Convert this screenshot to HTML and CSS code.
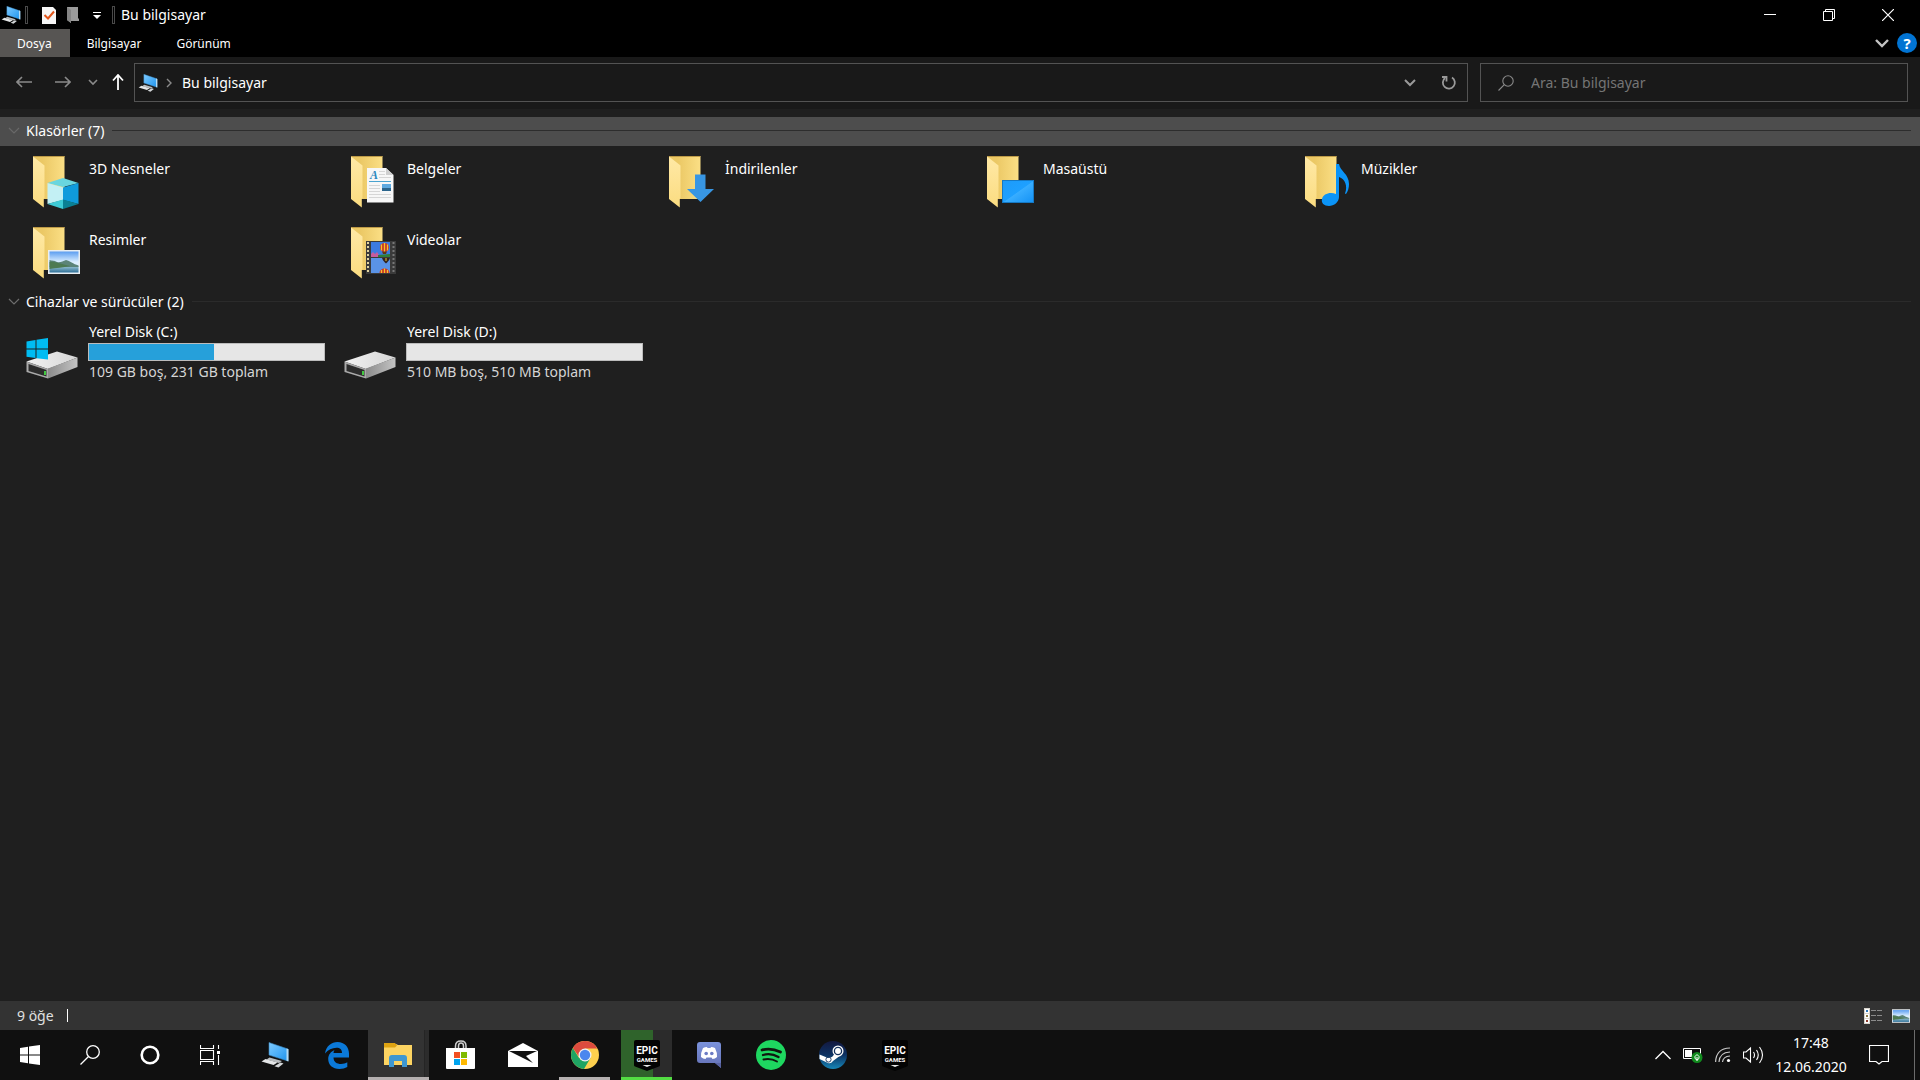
FILE: index.html
```html
<!DOCTYPE html>
<html lang="tr">
<head>
    <meta charset="UTF-8">
    <meta name="viewport" content="width=device-width, initial-scale=1.0">
    <title>Bu bilgisayar</title>
    <link rel="stylesheet" href="styles.css">
</head>
<body>
    <!-- shared icon shapes -->
    <svg class="defs" width="0" height="0" aria-hidden="true">
        <defs>
            <linearGradient id="folderBack" x1="0" x2="1">
                <stop offset="0.3" stop-color="#ebc865"/>
                <stop offset="1" stop-color="#fbdf85"/>
            </linearGradient>
            <linearGradient id="folderFront" x1="0" y1="0" x2="0" y2="1">
                <stop offset="0" stop-color="#ffe9a6"/>
                <stop offset="1" stop-color="#fbdc80"/>
            </linearGradient>
            <linearGradient id="screen" x1="0" y1="0" x2="1" y2="1">
                <stop offset="0" stop-color="#7fcbff"/>
                <stop offset="1" stop-color="#1d94ef"/>
            </linearGradient>
            <linearGradient id="sky" x1="0" y1="0" x2="0" y2="1">
                <stop offset="0" stop-color="#5b9df0"/>
                <stop offset="0.5" stop-color="#dcefff"/>
            </linearGradient>
            <linearGradient id="water" x1="0" y1="0" x2="0" y2="1">
                <stop offset="0" stop-color="#9cc6d4"/>
                <stop offset="1" stop-color="#2f6f96"/>
            </linearGradient>
            <linearGradient id="desk" x1="0" y1="0" x2="1" y2="1">
                <stop offset="0" stop-color="#1d9bfa"/>
                <stop offset="0.5" stop-color="#1ea0ff"/>
                <stop offset="0.52" stop-color="#38adff"/>
                <stop offset="1" stop-color="#1492f5"/>
            </linearGradient>
            <linearGradient id="driveSide" x1="0" x2="1">
                <stop offset="0" stop-color="#8b8b8b"/>
                <stop offset="1" stop-color="#c4c4c4"/>
            </linearGradient>
            <linearGradient id="driveTop" x1="0" x2="1">
                <stop offset="0" stop-color="#f2f2f2"/>
                <stop offset="1" stop-color="#d6d6d6"/>
            </linearGradient>
            <linearGradient id="steamBg" x1="0" y1="0" x2="0" y2="1">
                <stop offset="0" stop-color="#13183f"/>
                <stop offset="0.5" stop-color="#0d3263"/>
                <stop offset="1" stop-color="#1787b8"/>
            </linearGradient>
            <linearGradient id="discordBg" x1="0" y1="0" x2="0" y2="1">
                <stop offset="0" stop-color="#7b93dc"/>
                <stop offset="1" stop-color="#6470b4"/>
            </linearGradient>

            <symbol id="pc" viewBox="0 0 28 26">
                <path d="M8 0.500 L27 7 L27 19 L8 13 Z" fill="url(#screen)" stroke="#3c88bf" stroke-width="0.600"/>
                <path d="M25.500 6.500 L27.500 7.200 V19.500 L25.500 18.800 Z" fill="#b9dcf2"/>
                <path d="M8.500 15.500 L21 19 L18 21 L5.500 17.600 Z" fill="#b9bdc0"/>
                <path d="M4.500 17 L16.500 20.500 L12.500 23 L0.500 19.500 Z" fill="#e4e6e7"/>
                <path d="M19.500 20.500 L22.500 21.500 L17.500 25.500 L13.500 24.300 Z" fill="#d3d6d8"/>
            </symbol>
            <symbol id="folder" viewBox="0 0 48 54">
                <path d="M0 0 H31.500 V43 H0 Z" fill="url(#folderBack)"/>
                <path d="M0 0.400 H31.500" stroke="#b89544" stroke-width="1"/>
                <path d="M0 0.500 L11.500 9.500 V42 L10.800 43 V51.500 L0 43 Z" fill="url(#folderFront)"/>
            </symbol>
            <symbol id="photo" viewBox="0 0 32 24">
                <rect width="32" height="24" fill="#e9eef2"/>
                <rect x="1.500" y="1.500" width="29" height="21" fill="url(#sky)"/>
                <path d="M1.500 16 H30.500 V22.500 H1.500 Z" fill="url(#water)"/>
                <path d="M1.500 10 C4 11 6 10 9 12 C12 13 15 11 18 10 C22 11 25 14 30.500 15.500 V17 H1.500 Z" fill="#5c8478"/>
                <path d="M1.500 12 C6 11 12 14 22 16 C15 17.500 8 18 1.500 19 Z" fill="#4d7a52"/>
            </symbol>
            <symbol id="drive" viewBox="0 0 52 41">
                <path d="M0.500 23.500 L31 13.500 L51.500 19.500 L22 31 Z" fill="url(#driveTop)"/>
                <path d="M22 30.500 L51.500 19.500 V29 L22 40.500 Z" fill="url(#driveSide)"/>
                <path d="M0.500 23.500 L22 31 V40.500 L0.500 34 Z" fill="#aaaaaa"/>
                <path d="M2.500 26 L20.500 32 V38.500 L2.500 33 Z" fill="#2c2c2c"/>
                <rect x="18" y="33" width="2" height="4" fill="#42c840"/>
            </symbol>
            <symbol id="epic" viewBox="0 0 26 31">
                <path d="M2 0 H24 Q26 0 26 2 V25 Q26 26 25 26.500 L13 31 L1 26.500 Q0 26 0 25 V2 Q0 0 2 0 Z" fill="#030303"/>
                <text x="13" y="14" text-anchor="middle" class="epic-name">EPIC</text>
                <text x="13" y="22" text-anchor="middle" class="epic-sub">GAMES</text>
                <path d="M8.500 25 H17.500 L13 27 Z" fill="#e8e8e8"/>
            </symbol>
        </defs>
    </svg>

    <header class="titlebar">
        <svg width="20" height="18"><use href="#pc"/></svg>
        <span class="sep"></span>
        <button class="quick" aria-label="Özellikler">
            <svg width="14" height="18" viewBox="0 0 14 18">
                <path d="M0 1 H11 L14 4 V18 H0 Z" fill="#f6f6f6"/>
                <path d="M2.500 9 L6 12.500 L12 5.500" fill="none" stroke="#e2561b" stroke-width="2"/>
            </svg>
        </button>
        <button class="quick" aria-label="Yeni klasör">
            <svg width="12" height="18" viewBox="0 0 12 18">
                <path d="M0 1 H11 V12 L12 13 V15 H4 V17 L0 14 Z" fill="#9b9b9b"/>
                <path d="M0 1 L4 4 V17 L0 14 Z" fill="#858585"/>
            </svg>
        </button>
        <button class="quick" aria-label="Hızlı erişim">
            <svg width="8" height="8" viewBox="0 0 8 8">
                <path d="M0 1.500 H8" stroke="#fff"/>
                <path d="M0 4 H8 L4 8 Z" fill="#fff"/>
            </svg>
        </button>
        <span class="sep"></span>
        <h1>Bu bilgisayar</h1>
        <div class="window-buttons">
            <button aria-label="Küçült">
                <svg width="12" height="12"><path d="M0 5.500 H12" stroke="#fff"/></svg>
            </button>
            <button aria-label="Geri yükle">
                <svg width="12" height="12" fill="none" stroke="#fff">
                    <path d="M0.500 2.500 H9.500 V11.500 H0.500 Z M2.500 2.500 V0.500 H11.500 V9.500 H9.500"/>
                </svg>
            </button>
            <button aria-label="Kapat">
                <svg width="12" height="12"><path d="M0 0 L12 12 M12 0 L0 12" stroke="#fff" stroke-width="1.200"/></svg>
            </button>
        </div>
    </header>

    <nav class="ribbon">
        <button class="tab active">Dosya</button>
        <button class="tab">Bilgisayar</button>
        <button class="tab">Görünüm</button>
        <div class="ribbon-end">
            <button aria-label="Şeridi genişlet">
                <svg width="14" height="10"><path d="M1 2 L7 8 L13 2" fill="none" stroke="#c3c3c3" stroke-width="2.400"/></svg>
            </button>
            <button class="help" aria-label="Yardım">?</button>
        </div>
    </nav>

    <div class="toolbar">
        <div class="arrows">
            <button aria-label="Geri">
                <svg width="16" height="12"><path d="M16 6 H1 M6 1 L1 6 L6 11" fill="none" stroke="#8a8a8a" stroke-width="1.600"/></svg>
            </button>
            <button aria-label="İleri">
                <svg width="16" height="12"><path d="M0 6 H15 M10 1 L15 6 L10 11" fill="none" stroke="#8a8a8a" stroke-width="1.600"/></svg>
            </button>
            <button class="recent" aria-label="Son konumlar">
                <svg width="10" height="8"><path d="M1 2 L5 6 L9 2" fill="none" stroke="#8a8a8a" stroke-width="1.600"/></svg>
            </button>
            <button class="up" aria-label="Yukarı">
                <svg width="12" height="16"><path d="M6 16 V1 M1 6.500 L6 1 L11 6.500" fill="none" stroke="#fff" stroke-width="1.800"/></svg>
            </button>
        </div>
        <div class="address">
            <svg width="20" height="18"><use href="#pc"/></svg>
            <svg class="crumb-arrow" width="6" height="10"><path d="M1 1 L5 5 L1 9" fill="none" stroke="#8a8a8a" stroke-width="1.400"/></svg>
            <a href="#">Bu bilgisayar</a>
            <button class="address-drop" aria-label="Önceki konumlar">
                <svg width="12" height="8"><path d="M1 1 L6 6 L11 1" fill="none" stroke="#9a9a9a" stroke-width="2"/></svg>
            </button>
            <button class="refresh" aria-label="Yenile">
                <svg width="16" height="16" fill="none" stroke="#9a9a9a" stroke-width="1.800">
                    <path d="M11 2.500 A6 6 0 1 1 4 3"/>
                    <path d="M1 2 H5.500 V6.500"/>
                </svg>
            </button>
        </div>
        <div class="search">
            <svg width="16" height="16" fill="none" stroke="#8a8a8a" stroke-width="1.100">
                <circle cx="10" cy="6" r="5.200"/>
                <path d="M6.300 9.700 L0.500 15.500"/>
            </svg>
            <input type="text" aria-label="Ara" placeholder="Ara: Bu bilgisayar">
        </div>
    </div>

    <main>
        <section>
            <button class="group-head selected">
                <svg width="12" height="8"><path d="M1 1 L6 6 L11 1" fill="none" stroke="#696969" stroke-width="1.200"/></svg>
                <span>Klasörler (7)</span>
            </button>
            <div class="grid">
                <a class="folder" href="#">
                    <svg width="48" height="54">
                        <use href="#folder"/>
                        <path d="M14.500 27 L30 22 L45.500 27 L30 31 Z" fill="#69d6df"/>
                        <path d="M14.500 27 L30 31.500 V44 L14.500 48 Z" fill="#c3f0f4"/>
                        <path d="M30 31.500 L45.500 27 V48 L30 44 Z" fill="#0f9bdc"/>
                        <path d="M14.500 48 L30 43.500 V53 Z" fill="#3ecbd6"/>
                        <path d="M30 43.500 L45.500 48 L30 53 Z" fill="#0a8094"/>
                    </svg>
                    <span>3D Nesneler</span>
                </a>
                <a class="folder" href="#">
                    <svg width="48" height="54">
                        <use href="#folder"/>
                        <path d="M16 12 H35 L42.500 19 V46.500 H16 Z" fill="#f7f7f7"/>
                        <path d="M35 12 L42.500 19 H35 Z" fill="#cfcfcf"/>
                        <path d="M28 15.500 H34 M28 18.500 H34 M28 21.500 H40 M18 29.500 H29 M18 32.500 H29 M18 35.500 H29 M18 38.500 H40 M18 41.500 H40" stroke="#d6d6d6"/>
                        <path d="M18 25.500 H40" stroke="#4aa3d0"/>
                        <rect x="31" y="28" width="9" height="4" fill="#5da9e0"/>
                        <rect x="31" y="32" width="9" height="3" fill="#2b658c"/>
                        <text x="19" y="23" class="doc-letter">A</text>
                    </svg>
                    <span>Belgeler</span>
                </a>
                <a class="folder" href="#">
                    <svg width="48" height="54">
                        <use href="#folder"/>
                        <path d="M26 18.500 H36.500 V33 H45 L31.500 46 L18 33 H26 Z" fill="#3896e3"/>
                    </svg>
                    <span>İndirilenler</span>
                </a>
                <a class="folder" href="#">
                    <svg width="48" height="54">
                        <use href="#folder"/>
                        <rect x="15.500" y="24.500" width="31" height="22" fill="url(#desk)" stroke="#1679c4"/>
                    </svg>
                    <span>Masaüstü</span>
                </a>
                <a class="folder" href="#">
                    <svg width="48" height="54">
                        <use href="#folder"/>
                        <path d="M31 8 H34 C35 15 44 18 44 28 C44 32 43 35 41 38 L40 37.500 C43 30 40 23 34 21 V41 C34 46 29 50 24 50 C19 50 16 47 17 43 C18 38 25 35.500 31 38 Z" fill="#0b94f7"/>
                    </svg>
                    <span>Müzikler</span>
                </a>
                <a class="folder" href="#">
                    <svg width="48" height="54">
                        <use href="#folder"/>
                        <use href="#photo" x="15" y="23" width="32" height="24"/>
                    </svg>
                    <span>Resimler</span>
                </a>
                <a class="folder" href="#">
                    <svg width="48" height="54">
                        <use href="#folder"/>
                        <rect x="15" y="14" width="30" height="33" fill="#3a3a3a"/>
                        <path d="M17 15 V47" stroke="#e0d3a0" stroke-width="2" stroke-dasharray="2 2"/>
                        <path d="M42.500 15 V47" stroke="#777" stroke-width="2" stroke-dasharray="2 2"/>
                        <rect x="20" y="15" width="19" height="15" fill="#3d7be0"/>
                        <rect x="20" y="31" width="19" height="15" fill="#5a93e6"/>
                        <path d="M20 30 V27 L22 25 L24 27 L26 25 L28 28 V30 Z" fill="#c65c9e"/>
                        <path d="M27 30 V28 L39 27 V30 Z" fill="#2f7d3b"/>
                        <circle cx="33.500" cy="20.500" r="4.500" fill="#c93a26"/>
                        <path d="M33.500 16 V25 M30.500 17.500 V23.500 M36.500 17.500 V23.500" stroke="#f5c32c" stroke-width="1.200"/>
                        <path d="M31 24.500 H36 L35 27 H32 Z" fill="#5d3516"/>
                        <path d="M31 31 H39 C38 34 36.500 35 35 36.500 C33.500 35 32 34 31 31 Z" fill="#33251f"/>
                        <path d="M35 31 V34" stroke="#f5c32c"/>
                        <path d="M28.500 46 C28.500 40 38.500 40 38.500 46 Z" fill="#c93a26"/>
                        <path d="M33.500 41.500 V46 M30.500 43 V46 M36.500 43 V46" stroke="#f5c32c" stroke-width="1.200"/>
                    </svg>
                    <span>Videolar</span>
                </a>
            </div>
        </section>

        <section>
            <button class="group-head">
                <svg width="12" height="8"><path d="M1 1 L6 6 L11 1" fill="none" stroke="#6e6e6e" stroke-width="1.200"/></svg>
                <span>Cihazlar ve sürücüler (2)</span>
            </button>
            <div class="grid">
                <a class="drive" href="#">
                    <svg width="52" height="41">
                        <use href="#drive"/>
                        <path d="M0.500 3.500 L9.500 2 V10.500 H0.500 Z M10.500 1.800 L22 0 V10.500 H10.500 Z M0.500 11.500 H9.500 V20 L0.500 18.700 Z M10.500 11.500 H22 V21.500 L10.500 20.200 Z" fill="#00bcf2"/>
                    </svg>
                    <div class="drive-info">
                        <span>Yerel Disk (C:)</span>
                        <div class="meter"><div class="used" style="width: 53%"></div></div>
                        <span class="detail">109 GB boş, 231 GB toplam</span>
                    </div>
                </a>
                <a class="drive" href="#">
                    <svg width="52" height="41"><use href="#drive"/></svg>
                    <div class="drive-info">
                        <span>Yerel Disk (D:)</span>
                        <div class="meter"><div class="used" style="width: 0%"></div></div>
                        <span class="detail">510 MB boş, 510 MB toplam</span>
                    </div>
                </a>
            </div>
        </section>
    </main>

    <footer class="status">
        <span>9 öğe</span>
        <span class="status-line"></span>
        <div class="views">
            <button aria-label="Ayrıntılar">
                <svg width="18" height="16">
                    <path d="M0 0 H6 V16 H0 Z" fill="#d8d4cc"/>
                    <path d="M1 1 H5 V5 H1 Z M1 6 H5 V10 H1 Z M1 11 H5 V15 H1 Z" fill="#fff"/>
                    <path d="M2 2 H4 V4 H2 Z" fill="#3178b8"/>
                    <path d="M2 7 H4 V9 H2 Z" fill="#8a7a45"/>
                    <path d="M2 12 H4 V14 H2 Z" fill="#8c3b2e"/>
                    <path d="M7 2.500 H12 M13 2.500 H18 M7 7.500 H12 M13 7.500 H18 M7 12.500 H12 M13 12.500 H18" stroke="#8b8b8b"/>
                </svg>
            </button>
            <button aria-label="Büyük simgeler">
                <svg width="18" height="14"><use href="#photo"/></svg>
            </button>
        </div>
    </footer>

    <nav class="taskbar">
        <div class="system">
            <button aria-label="Başlat">
                <svg width="20" height="20" fill="#fff"><path d="M0 3 L8 1.800 V9.500 H0 Z M9 1.600 L20 0 V9.500 H9 Z M0 10.500 H8 V18.200 L0 17 Z M9 10.500 H20 V20 L9 18.400 Z"/></svg>
            </button>
            <button aria-label="Ara">
                <svg width="20" height="20" fill="none" stroke="#fff" stroke-width="1.300">
                    <circle cx="13" cy="7" r="6.300"/>
                    <path d="M8.500 11.500 L0.500 19.500"/>
                </svg>
            </button>
            <button aria-label="Cortana">
                <svg width="20" height="20"><circle cx="10" cy="10" r="8.300" fill="none" stroke="#fff" stroke-width="2.600"/></svg>
            </button>
            <button aria-label="Görev görünümü">
                <svg width="20" height="20" fill="none" stroke="#fff" stroke-width="1.100">
                    <path d="M0.500 0 V3.500 H13.500 V0 M0.500 5.500 H13.500 V14.500 H0.500 Z M0.500 20 V16.500 H13.500 V20 M18.500 0 V4 M18.500 10 V20"/>
                    <rect x="17" y="6" width="3" height="3" fill="#fff" stroke="none"/>
                </svg>
            </button>
        </div>
        <div class="apps">
            <button aria-label="Bu bilgisayar">
                <svg width="28" height="26"><use href="#pc"/></svg>
            </button>
            <button aria-label="Edge">
                <svg width="24" height="27" viewBox="0 0 24 27">
                    <path d="M0 11.500 C1 4 6.500 0 12.500 0 C19.500 0 24 5 24 11.500 V15.500 H8.500 C8.500 20 12 22 16 22 C18.500 22 20.500 21.300 22.300 20.300 V25 C20 26.300 17.500 27 14.500 27 C7.500 27 3.200 22.800 3.200 17 C3.200 12.500 6 9.500 9.500 8 C8.800 9 8.500 10 8.500 11 H17 C17 7.500 15 5.800 11.500 5.800 C7 5.800 3 8 0 11.500 Z" fill="#0b79d8"/>
                </svg>
            </button>
            <button class="explorer" aria-label="Dosya Gezgini">
                <svg width="28" height="24">
                    <path d="M0 1 H12 L14 2 H28 V22 H0 Z" fill="#fcd462"/>
                    <path d="M0 0 H11 L13 2.500 L11 4.500 H0 Z" fill="#dea312"/>
                    <path d="M5 24 V15 Q5 12 8 12 H20 Q23 12 23 15 V24 H18 V18 H10 V24 Z" fill="#3e97d1"/>
                </svg>
            </button>
            <button aria-label="Mağaza">
                <svg width="30" height="30">
                    <path d="M9.500 8 V6 Q9.500 1 15 1 Q20 1 20 6 V8 M12.500 8 V6 Q12.500 3 15 3 Q17.500 3 17.500 6 V8" fill="none" stroke="#cfcfcf" stroke-width="1.500"/>
                    <path d="M0 8 H29 V28 Q29 29 28 29 H1 Q0 29 0 28 Z" fill="#fff"/>
                    <rect x="8" y="12" width="6" height="6" fill="#f25022"/>
                    <rect x="15" y="12" width="6" height="6" fill="#7fba00"/>
                    <rect x="8" y="19" width="6" height="6" fill="#00a4ef"/>
                    <rect x="15" y="19" width="6" height="6" fill="#ffb900"/>
                </svg>
            </button>
            <button aria-label="Posta">
                <svg width="30" height="24">
                    <path d="M0 8 L15 0 L30 8 V24 H0 Z" fill="#fff"/>
                    <path d="M1 8 H29 L18 13 L25 20 L13 14 Z" fill="#101010"/>
                </svg>
            </button>
            <button class="running" aria-label="Chrome">
                <svg width="28" height="28">
                    <circle cx="14" cy="14" r="14" fill="#fdd04e"/>
                    <path d="M1.900 7 A14 14 0 0 0 13 28 L19.500 17 L8 17 Z" fill="#1fa463"/>
                    <path d="M1.900 7 A14 14 0 0 1 26.300 7.500 H14 L7.500 15 Z" fill="#dd4b3e"/>
                    <circle cx="14" cy="14" r="6.500" fill="#f1f1f1"/>
                    <circle cx="14" cy="14" r="5.200" fill="#4a87ee"/>
                </svg>
            </button>
            <button class="progress" aria-label="Epic Games">
                <svg width="26" height="31"><use href="#epic"/></svg>
            </button>
            <button aria-label="Discord">
                <svg width="24" height="26">
                    <path d="M3 0 H21 Q24 0 24 3 V26 L18 21 H3 Q0 21 0 18 V3 Q0 0 3 0 Z" fill="url(#discordBg)"/>
                    <path d="M18 21 L24 26 V21 Z" fill="#5862a0"/>
                    <path d="M6 6 Q8 5 10 5 L10.500 6 H13.500 L14 5 Q16 5 18 6 Q20.500 11 20 15 Q18 17 15.500 17 L14.500 15.500 H9.500 L8.500 17 Q6 17 4 15 Q3.500 11 6 6 Z" fill="#fff"/>
                    <circle cx="9.200" cy="11.500" r="1.800" fill="#6c7cc4"/>
                    <circle cx="14.800" cy="11.500" r="1.800" fill="#6c7cc4"/>
                </svg>
            </button>
            <button aria-label="Spotify">
                <svg width="30" height="30" fill="none" stroke="#10170f" stroke-linecap="round">
                    <circle cx="15" cy="15" r="15" fill="#1ed760" stroke="none"/>
                    <path d="M6 10 Q15 7.500 24.500 12" stroke-width="2.800"/>
                    <path d="M7 15 Q15 12.700 22.500 17" stroke-width="2.300"/>
                    <path d="M7.500 19.500 Q15 18 21 21.500" stroke-width="1.900"/>
                </svg>
            </button>
            <button aria-label="Steam">
                <svg width="28" height="28">
                    <circle cx="14" cy="14" r="14" fill="url(#steamBg)"/>
                    <path d="M0.500 13.500 L9 17 L13 16 L19 9 L22 14 L14 20 Q12 23 9 22 L0.500 18 Z" fill="#fff"/>
                    <circle cx="19" cy="10" r="5.500" fill="#fff"/>
                    <circle cx="19" cy="10" r="3.600" fill="none" stroke="#15315c" stroke-width="1.300"/>
                    <circle cx="9.500" cy="18.500" r="2.600" fill="none" stroke="#15315c" stroke-width="0.900"/>
                </svg>
            </button>
            <button aria-label="Epic Games Launcher">
                <svg width="26" height="31"><use href="#epic"/></svg>
            </button>
        </div>
        <div class="tray">
            <button aria-label="Gizli simgeler">
                <svg width="16" height="10"><path d="M0.500 9 L8 1.500 L15.500 9" fill="none" stroke="#fff" stroke-width="1.300"/></svg>
            </button>
            <button aria-label="Pil">
                <svg width="20" height="16">
                    <path d="M0.500 1.500 H17.500 V11.500 H0.500 Z" fill="none" stroke="#fff"/>
                    <path d="M2 3 H9 V10 H2 Z" fill="#fff"/>
                    <circle cx="14" cy="10.500" r="5.500" fill="#118a1e"/>
                    <path d="M14 7.500 L16 9.500 V11.500 L14 13 L12 11.500 V9.500 Z M14 10 V14" fill="none" stroke="#fff"/>
                </svg>
            </button>
            <button aria-label="Ağ">
                <svg width="16" height="16" fill="none" stroke="#c8c8c8" stroke-width="1.200">
                    <path d="M0.600 15 Q1 1.500 15 1 M4 15 Q4.500 5.500 15 5 M7.500 15 Q8 9.500 15 9"/>
                    <circle cx="13.500" cy="13.500" r="1.600" fill="#fff" stroke="none"/>
                </svg>
            </button>
            <button aria-label="Ses">
                <svg width="22" height="18" fill="none" stroke="#fff" stroke-width="1.100">
                    <path d="M0.500 6 H3 L7.500 2 V16 L3 12 H0.500 Z M10.500 6 Q12.500 9 10.500 12 M13.500 4 Q17 9 13.500 14 M16.500 1 Q22.500 9 16.500 17"/>
                </svg>
            </button>
            <button class="clock">17:48<br>12.06.2020</button>
            <button class="notify" aria-label="Bildirimler">
                <svg width="20" height="20"><path d="M0.500 0.500 H19.500 V16.500 H13 L10 19 L7 16.500 H0.500 Z" fill="none" stroke="#fff" stroke-width="1.200"/></svg>
            </button>
            <button class="show-desktop" aria-label="Masaüstünü göster"></button>
        </div>
    </nav>
</body>
</html>
```
FILE: styles.css
```css
* {
    box-sizing: border-box;
}
body {
    margin: 0;
    height: 100vh;
    display: flex;
    flex-direction: column;
    background-color: #1f1f1f;
    color: #fff;
    font-family: "Noto Sans", "Open Sans", sans-serif;
    font-size: 14px;
    line-height: 18px;
    overflow: hidden;
}
svg {
    display: block;
    flex: none;
}
.defs {
    position: absolute;
}
button {
    display: flex;
    align-items: center;
    justify-content: center;
    padding: 0;
    border: none;
    background: none;
    color: inherit;
    font: inherit;
}
a {
    color: inherit;
    text-decoration: none;
}

/* title bar */
.titlebar {
    display: flex;
    align-items: center;
    height: 29px;
    padding: 0 3px 0 1px;
    background-color: #000;
}
.sep {
    width: 3px;
    height: 18px;
    margin: 0 4px;
    border: 1px solid #4a4a4a;
}
.quick {
    width: 24px;
    height: 24px;
}
.sep + .quick {
    margin-left: 5px;
}
.quick + .sep {
    margin-left: 3px;
}
h1 {
    margin: 0 0 0 2px;
    font-size: 14px;
    font-weight: normal;
}
.window-buttons {
    display: flex;
    height: 100%;
    margin-left: auto;
}
.window-buttons button {
    width: 59px;
}

/* ribbon tabs */
.ribbon {
    display: flex;
    height: 28px;
    background-color: #000;
    font-size: 12px;
}
.tab {
    padding: 1px 18px 0 17px;
}
.tab.active {
    background-color: #575553;
}
.ribbon-end {
    display: flex;
    align-items: center;
    gap: 8px;
    margin-left: auto;
    padding-right: 3px;
}
.help {
    width: 20px;
    height: 20px;
    border-radius: 50%;
    background-color: #0173d2;
    font-size: 15px;
    font-weight: bold;
}

/* navigation */
.toolbar {
    display: flex;
    height: 52px;
    padding: 6px 12px 8px 16px;
    background-color: #191919;
}
.arrows {
    display: flex;
    align-items: center;
    width: 118px;
    gap: 23px;
}
.recent {
    margin-left: -6px;
}
.up {
    margin-left: -9px;
}
.address, .search {
    display: flex;
    align-items: center;
    height: 39px;
    border: 1px solid #535353;
}
.address {
    flex: 1;
    padding: 0 10px 0 3px;
}
.crumb-arrow {
    margin: 0 10px 0 8px;
}
.address-drop {
    margin-left: auto;
}
.refresh {
    margin-left: 25px;
}
.search {
    width: 428px;
    margin-left: 12px;
    padding: 0 17px;
    gap: 17px;
}
.search input {
    flex: 1;
    min-width: 0;
    padding: 0;
    border: none;
    outline: none;
    background: none;
    color: #fff;
    font: inherit;
}
.search input::placeholder {
    color: #757575;
    opacity: 1;
}

/* file list */
main {
    flex: 1;
    min-height: 0;
    padding-top: 8px;
}
.group-head {
    width: 100%;
    height: 29px;
    padding: 0 9px 2px 8px;
    gap: 6px;
}
.group-head::after {
    content: "";
    flex: 1;
    height: 1px;
    margin-left: 2px;
    background-color: #2b2b2b;
}
.group-head.selected {
    background-color: #4d4d4d;
}
.group-head.selected::after {
    background-color: #2d2d2d;
}
.grid {
    display: grid;
    grid-template-columns: repeat(auto-fill, 318px);
    padding-right: 20px;
}
.folder {
    display: flex;
    height: 71px;
    padding: 10px 0 0 33px;
    gap: 8px;
}
.folder span {
    padding-top: 4px;
}
.drive {
    display: flex;
    padding: 6px 0 0 26px;
    gap: 10px;
}
.drive svg {
    margin-top: 15px;
}
.drive-info {
    display: flex;
    flex: none;
    flex-direction: column;
    gap: 2px;
    width: 237px;
}
.drive-info span {
    padding-left: 1px;
}
.meter {
    height: 18px;
    border: 1px solid #bcbcbc;
    background-color: #e6e6e6;
}
.used {
    height: 100%;
    background-color: #26a0da;
}
.detail {
    color: #d5d5d5;
}
.doc-letter {
    fill: #2a87bd;
    font: italic bold 12px "Liberation Serif", serif;
}

/* status bar */
.status {
    display: flex;
    align-items: center;
    height: 29px;
    padding: 0 10px 0 17px;
    background-color: #333;
    color: #e0e0e0;
}
.status-line {
    width: 1px;
    height: 13px;
    margin-left: 13px;
    background-color: #fff;
}
.views {
    display: flex;
    align-items: center;
    gap: 10px;
    margin-left: auto;
}

/* taskbar */
.taskbar {
    display: flex;
    height: 50px;
    background-color: #101010;
}
.system, .apps, .tray {
    display: flex;
}
.system button {
    width: 60px;
}
.apps {
    padding-left: 9px;
    gap: 11px;
}
.apps button {
    width: 51px;
}
.apps button.explorer {
    width: 61px;
    margin: 0 -5px;
    padding-right: 2px;
    background: linear-gradient(to right, #333 56px, #252525 56px, #252525 57px, #2c2c2c 57px);
    box-shadow: inset 0 -3px #b5b0b0;
}
.running {
    box-shadow: inset 0 -3px #b5b0b0;
}
.progress {
    background: linear-gradient(to right, #2f632b 32px, #2b2b2b 32px);
    box-shadow: inset 0 -3px #53dd43;
}
.epic-name {
    fill: #fff;
    font: bold 10px Roboto, sans-serif;
}
.epic-sub {
    fill: #fff;
    font: bold 6px Roboto, sans-serif;
}
.tray {
    align-items: center;
    gap: 12px;
    margin-left: auto;
}
.clock {
    width: 80px;
    margin-left: -6px;
    line-height: 24px;
    text-align: center;
}
.notify {
    margin-left: 6px;
}
.show-desktop {
    width: 6px;
    height: 100%;
    margin-left: 13px;
    border-left: 1px solid #6b6b6b;
}
```
